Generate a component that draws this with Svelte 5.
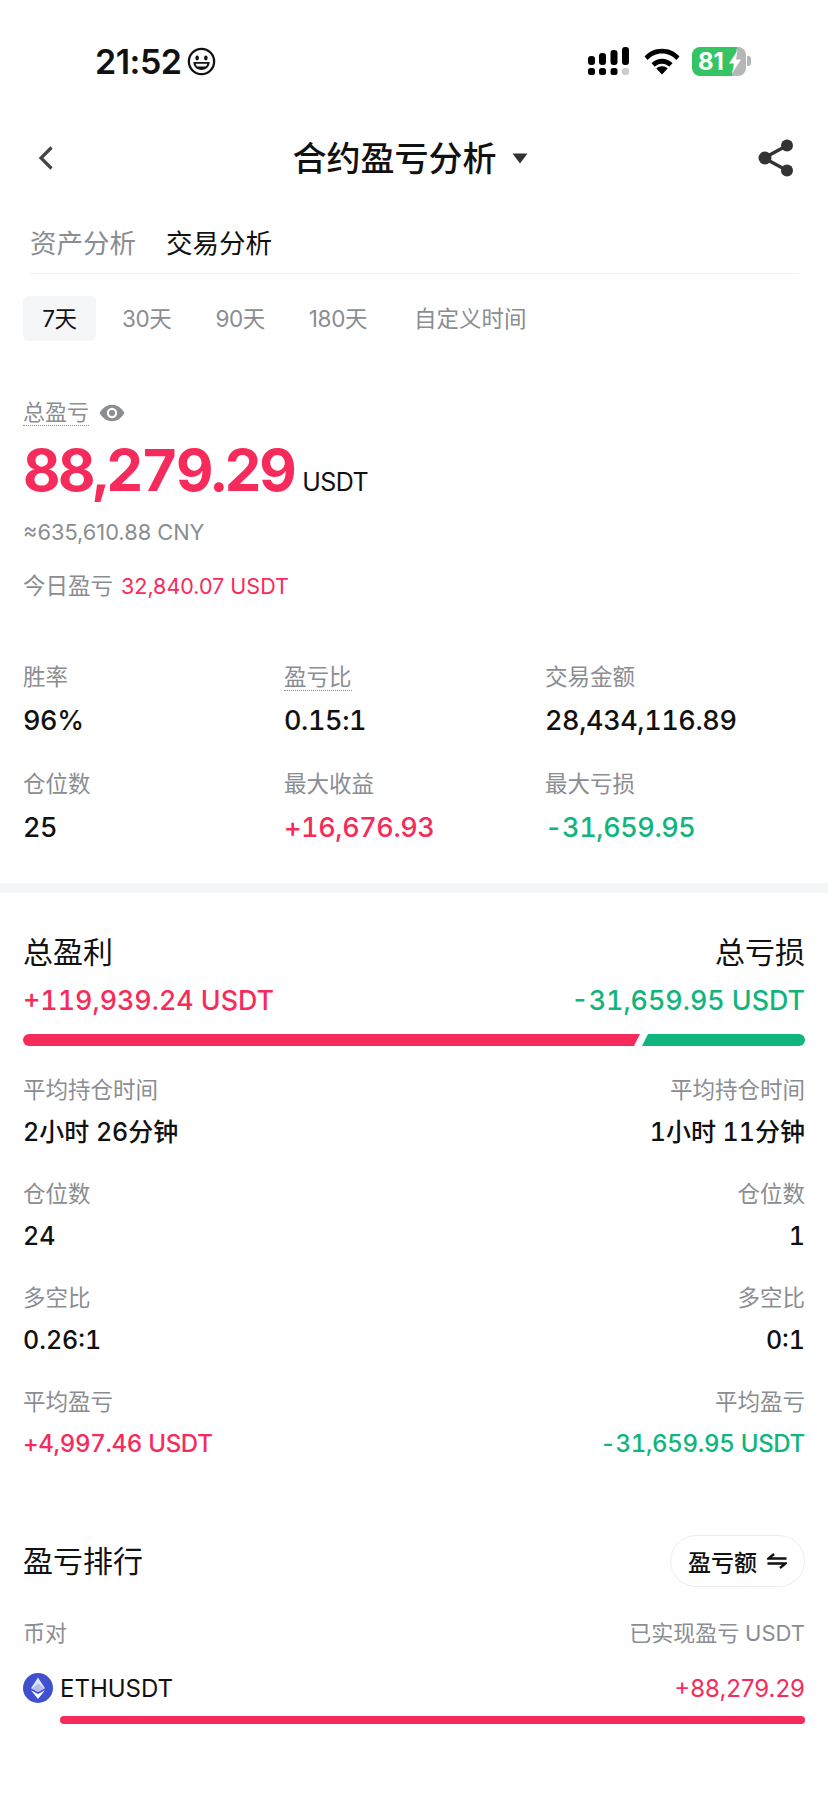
<script>
    const RANGES = ['7天', '30天', '90天', '180天', '自定义时间'];

    const STATS = [
        { label: '胜率', value: '96%' },
        { label: '盈亏比', value: '0.15:1', dotted: true },
        { label: '交易金额', value: '28,434,116.89' },
        { label: '仓位数', value: '25' },
        { label: '最大收益', value: '+16,676.93', tone: 'up' },
        { label: '最大亏损', value: '-31,659.95', tone: 'down' }
    ];

    const COMPARE = [
        { label: '平均持仓时间', left: '2小时 26分钟', right: '1小时 11分钟' },
        { label: '仓位数', left: '24', right: '1' },
        { label: '多空比', left: '0.26:1', right: '0:1' },
        { label: '平均盈亏', left: '+4,997.46 USDT', right: '-31,659.95 USDT', toned: true }
    ];
</script>

<div class="page">
    <div class="status">
        <div class="clock">
            <span>21:52</span>
            <svg width="29" height="29" viewBox="0 0 28 28" fill="none">
                <circle cx="14" cy="14" r="12.2" stroke="#111" stroke-width="2.2" />
                <ellipse cx="9.8" cy="10.6" rx="1.7" ry="2.4" fill="#111" />
                <ellipse cx="18.2" cy="10.6" rx="1.7" ry="2.4" fill="#111" />
                <path d="M6.2 14.6h15.6c0 4.6-3.4 7.6-7.8 7.6s-7.8-3-7.8-7.6z" fill="#111" />
                <path d="M8.4 16.2h11.2c-.3 1.3-.8 2-1.4 2.6H9.8c-.6-.6-1.1-1.3-1.4-2.6z" fill="#fff" />
            </svg>
        </div>
        <div class="sys">
            <svg class="signal" width="42" height="30" viewBox="0 0 42 30">
                <rect x="1" y="10" width="7" height="9" rx="3" fill="#000" />
                <rect x="1" y="22" width="7" height="7" rx="2.5" fill="#000" />
                <rect x="12" y="7" width="7" height="12" rx="3" fill="#000" />
                <rect x="12" y="22" width="7" height="7" rx="2.5" fill="#000" />
                <rect x="23.500" y="4" width="7" height="15" rx="3" fill="#000" />
                <rect x="23.500" y="22" width="7" height="7" rx="2.5" fill="#000" />
                <rect x="35" y="1" width="7" height="18" rx="3" fill="#000" />
                <rect x="35" y="22" width="7" height="7" rx="2.5" fill="#ccc" />
            </svg>
            <svg width="36" height="28" viewBox="0 0 36 28">
                <path d="M0.5 9.500C5 4.500 11 1.800 18 1.800s13 2.700 17.500 7.700l-3.200 3.400C28.600 8.800 23.700 6.500 18 6.500S7.400 8.800 3.700 12.900z" fill="#000" />
                <path d="M7.500 16.300C10.300 13.500 13.900 11.800 18 11.800s7.700 1.700 10.500 4.500l-3.300 3.400c-1.900-1.900-4.400-3-7.200-3s-5.300 1.100-7.200 3z" fill="#000" />
                <path d="M12.300 21.500c1.500-1.400 3.500-2.200 5.700-2.200s4.200.8 5.700 2.200L18 27.500z" fill="#000" />
            </svg>
            <div class="batt">
                <div class="batt-body">
                    <span class="batt-num">81</span>
                    <svg class="bolt" width="14" height="24" viewBox="0 0 14 24">
                        <path d="M9.500 0.500L1 13.500h5L4 23.500 13 9.500H8z" fill="#fff" />
                    </svg>
                </div>
                <div class="batt-cap"></div>
            </div>
        </div>
    </div>

    <div class="nav">
        <svg class="back" width="20" height="28" viewBox="0 0 20 28" fill="none">
            <path d="M15.500 3.500L5 14l10.500 10.500" stroke="#444" stroke-width="3.200" />
        </svg>
        <div class="title">
            <span class="title-text">合约盈亏分析</span>
            <svg width="16" height="11" viewBox="0 0 16 11"><path d="M0.500 0.500h15L8 10.500z" fill="#333" /></svg>
        </div>
        <svg class="share" width="36" height="38" viewBox="0 0 36 38" fill="none">
            <path d="M6 19L30 6M6 19l24 13" stroke="#333" stroke-width="3.400" />
            <circle cx="7" cy="19" r="6.500" fill="#333" />
            <circle cx="29" cy="6.500" r="6" fill="#333" />
            <circle cx="29" cy="31.500" r="6" fill="#333" />
        </svg>
    </div>

    <div class="tabs">
        <span class="tab">资产分析</span>
        <span class="tab active">交易分析</span>
    </div>

    <div class="ranges">
        {#each RANGES as range, i}
            <span class="range" class:on={i === 0} class:custom={i === 4}>{range}</span>
        {/each}
    </div>

    <section class="total">
        <div class="total-label">
            <span class="dotted">总盈亏</span>
            <svg width="26" height="18" viewBox="0 0 26 18">
                <path d="M0.500 9C4 3.500 8 0.800 13 0.800S22 3.500 25.500 9C22 14.500 18 17.200 13 17.200S4 14.500 0.500 9z" fill="#8a8d91" />
                <circle cx="13" cy="9" r="5.200" fill="#fff" />
                <circle cx="13" cy="9" r="3" fill="#8a8d91" />
            </svg>
        </div>
        <div class="amount"><strong>88,279.29</strong><span>USDT</span></div>
        <div class="cny">≈635,610.88 CNY</div>
        <div class="today">今日盈亏<span>32,840.07 USDT</span></div>
    </section>

    <section class="stats">
        {#each STATS as stat}
            <div class="stat">
                <div class="stat-label"><span class:dotted={stat.dotted}>{stat.label}</span></div>
                <div class="stat-value {stat.tone ?? ''}">{stat.value}</div>
            </div>
        {/each}
    </section>

    <div class="band"></div>

    <section class="compare">
        <div class="pair heads"><span>总盈利</span><span>总亏损</span></div>
        <div class="pair sums"><span class="up">+119,939.24 USDT</span><span class="down">-31,659.95 USDT</span></div>
        <div class="split">
            <div class="split-up"></div>
            <div class="split-down"></div>
        </div>
        <div class="rows">
            {#each COMPARE as row}
                <div class="row">
                    <div class="pair labels"><span>{row.label}</span><span>{row.label}</span></div>
                    <div class="pair values">
                        <span class:up={row.toned}>{row.left}</span>
                        <span class:down={row.toned}>{row.right}</span>
                    </div>
                </div>
            {/each}
        </div>
    </section>

    <section class="rank">
        <div class="rank-head">
            <h2>盈亏排行</h2>
            <div class="pill">
                <span>盈亏额</span>
                <svg width="20" height="16" viewBox="0 0 20 16" fill="none">
                    <path d="M7 1L1.500 5.500H19.500" stroke="#111" stroke-width="2.400" />
                    <path d="M13 15l5.500-4.500H.5" stroke="#111" stroke-width="2.400" />
                </svg>
            </div>
        </div>
        <div class="pair labels cols"><span>币对</span><span>已实现盈亏 USDT</span></div>
        <div class="coin">
            <div class="coin-name">
                <svg width="30" height="30" viewBox="0 0 30 30">
                    <circle cx="15" cy="15" r="15" fill="#3f51cf" />
                    <path d="M15 4.500L8 15.200l7 3.800 7-3.800z" fill="#dfe3f8" />
                    <path d="M8 17.200l7 8.800 7-8.800-7 3.800z" fill="#fff" />
                    <path d="M15 10.500l-6 4.700 6 3.800 6-3.800z" fill="#b4bcec" />
                </svg>
                <span>ETHUSDT</span>
            </div>
            <span class="up">+88,279.29</span>
        </div>
        <div class="coin-bar"></div>
    </section>
</div>

<style>
    :global(body) {
        background: #fff;
    }

    .page {
        width: 828px;
        height: 1800px;
        overflow: hidden;
        font-family: Inter, 'Noto Sans CJK SC', sans-serif;
        font-variant-numeric: tabular-nums;
        color: #111;
        background: #fff;
    }

    .status {
        display: flex;
        justify-content: space-between;
        align-items: center;
        height: 30px;
        padding: 46px 0 0 95px;
    }

    .clock {
        display: flex;
        align-items: center;
        gap: 6px;
        font-size: 34px;
        font-weight: 600;
        letter-spacing: -0.5px;
        font-variant-numeric: proportional-nums;
    }

    .sys {
        display: flex;
        align-items: center;
        gap: 12px;
        padding-right: 77px;
    }

    .signal {
        margin-right: 3px;
    }

    .batt {
        display: flex;
        align-items: center;
        gap: 1px;
    }

    .batt-body {
        position: relative;
        width: 54px;
        height: 29px;
        border-radius: 8px;
        background: linear-gradient(100deg, #35c463 0 76%, #b5b6b7 76%);
        overflow: hidden;
    }

    .batt-num {
        position: absolute;
        left: 6px;
        top: 1px;
        color: #fff;
        font-size: 24px;
        font-weight: 700;
        line-height: 27px;
        font-variant-numeric: proportional-nums;
    }

    .bolt {
        position: absolute;
        left: 36px;
        top: 3px;
    }

    .batt-cap {
        width: 4px;
        height: 10px;
        border-radius: 0 3px 3px 0;
        background: #b5b6b7;
    }

    .nav {
        display: flex;
        align-items: center;
        justify-content: space-between;
        height: 60px;
        margin-top: 52px;
        padding: 0 34px 0 36px;
    }

    .title {
        display: flex;
        align-items: center;
        gap: 15px;
        font-size: 34px;
        font-weight: 500;
        margin-left: 6px;
    }

    .title-text {
        margin-bottom: 4px;
    }

    .tabs {
        display: flex;
        gap: 30px;
        margin: 35px 30px 0;
        padding-bottom: 10px;
        border-bottom: 1px solid #f0f1f2;
        font-size: 26.500px;
        line-height: 40px;
    }

    .tab {
        color: #8a8d91;
    }

    .tab.active {
        color: #111;
    }

    .ranges {
        display: flex;
        align-items: center;
        gap: 44px;
        margin-top: 22px;
        padding-left: 23px;
        font-size: 22.500px;
        letter-spacing: -0.4px;
        color: #8a8d91;
        font-variant-numeric: proportional-nums;
    }

    .range {
        line-height: 45px;
    }

    .range.on {
        width: 73px;
        margin-right: -18px;
        text-align: center;
        border-radius: 6px;
        background: #f5f6f7;
        color: #111;
    }

    .range.custom {
        margin-left: 3px;
        letter-spacing: 0;
    }

    .total {
        padding: 0 23px;
        margin-top: 58px;
    }

    .total-label {
        display: flex;
        align-items: center;
        gap: 10px;
        font-size: 22px;
        line-height: 26px;
        color: #8a8d91;
    }

    .dotted {
        border-bottom: 1px dotted #8a8d91;
    }

    .amount {
        display: flex;
        align-items: baseline;
        gap: 8px;
        margin-top: 8px;
        color: #f72b5b;
        line-height: 72px;
    }

    .amount strong {
        font-size: 58px;
        font-weight: 700;
        letter-spacing: -2.500px;
    }

    .amount span {
        font-size: 25px;
        color: #111;
        letter-spacing: -0.5px;
    }

    .cny {
        margin-top: -1px;
        font-size: 21.800px;
        line-height: 30px;
        color: #8a8d91;
        font-variant-numeric: proportional-nums;
    }

    .today {
        display: flex;
        gap: 8px;
        margin-top: 24px;
        font-size: 22.500px;
        line-height: 30px;
        color: #8a8d91;
    }

    .today span {
        color: #f72b5b;
        font-size: 21.500px;
        font-variant-numeric: proportional-nums;
    }

    .stats {
        display: grid;
        grid-template-columns: 261px 261px 1fr;
        row-gap: 31px;
        padding: 0 23px;
        margin-top: 62px;
    }

    .stat-label {
        font-size: 22.500px;
        line-height: 28px;
        color: #8a8d91;
    }

    .stat-value {
        margin-top: 12px;
        font-size: 27px;
        line-height: 36px;
        font-weight: 500;
        letter-spacing: -0.4px;
    }

    .up {
        color: #f72b5b;
    }

    .down {
        color: #0fb57b;
    }

    .band {
        height: 10px;
        margin-top: 37px;
        background: #f5f6f7;
    }

    .compare {
        padding: 0 23px;
        margin-top: 39px;
    }

    .pair {
        display: flex;
        justify-content: space-between;
    }

    .heads {
        font-size: 30px;
        line-height: 40px;
    }

    .sums {
        margin-top: 10px;
        font-size: 26.800px;
        line-height: 36px;
        font-weight: 500;
    }

    .split {
        display: flex;
        gap: 2px;
        height: 12px;
        margin-top: 16px;
    }

    .split-up {
        width: 617px;
        background: #f72b5b;
        border-radius: 6px 0 0 6px;
        clip-path: polygon(0 0, 100% 0, calc(100% - 6px) 100%, 0 100%);
    }

    .split-down {
        flex: 1;
        background: #0fb57b;
        border-radius: 0 6px 6px 0;
        clip-path: polygon(6px 0, 100% 0, 100% 100%, 0 100%);
    }

    .rows {
        display: grid;
        gap: 32px;
        margin-top: 30px;
    }

    .labels {
        font-size: 22.500px;
        line-height: 28px;
        color: #8a8d91;
    }

    .values {
        margin-top: 12px;
        font-size: 25px;
        line-height: 32px;
        font-weight: 500;
    }

    .values .up,
    .values .down {
        font-size: 24px;
        letter-spacing: -0.3px;
    }

    .rank {
        padding: 0 23px;
        margin-top: 75px;
    }

    .rank-head {
        display: flex;
        justify-content: space-between;
        align-items: center;
    }

    h2 {
        margin: 0 0 4px;
        font-size: 30px;
        font-weight: 400;
    }

    .pill {
        display: flex;
        align-items: center;
        gap: 10px;
        height: 50px;
        padding: 0 17px;
        border: 1px solid #eceded;
        border-radius: 26px;
        font-size: 23px;
        font-weight: 500;
    }

    .cols {
        margin-top: 32px;
        font-size: 22px;
    }

    .coin {
        display: flex;
        justify-content: space-between;
        align-items: center;
        margin-top: 26px;
        font-size: 24px;
        font-variant-numeric: proportional-nums;
    }

    .coin-name {
        display: flex;
        align-items: center;
        gap: 7px;
    }

    .coin-bar {
        height: 8px;
        margin: 13px 0 0 37px;
        border-radius: 4px;
        background: #f72b5b;
    }
</style>
